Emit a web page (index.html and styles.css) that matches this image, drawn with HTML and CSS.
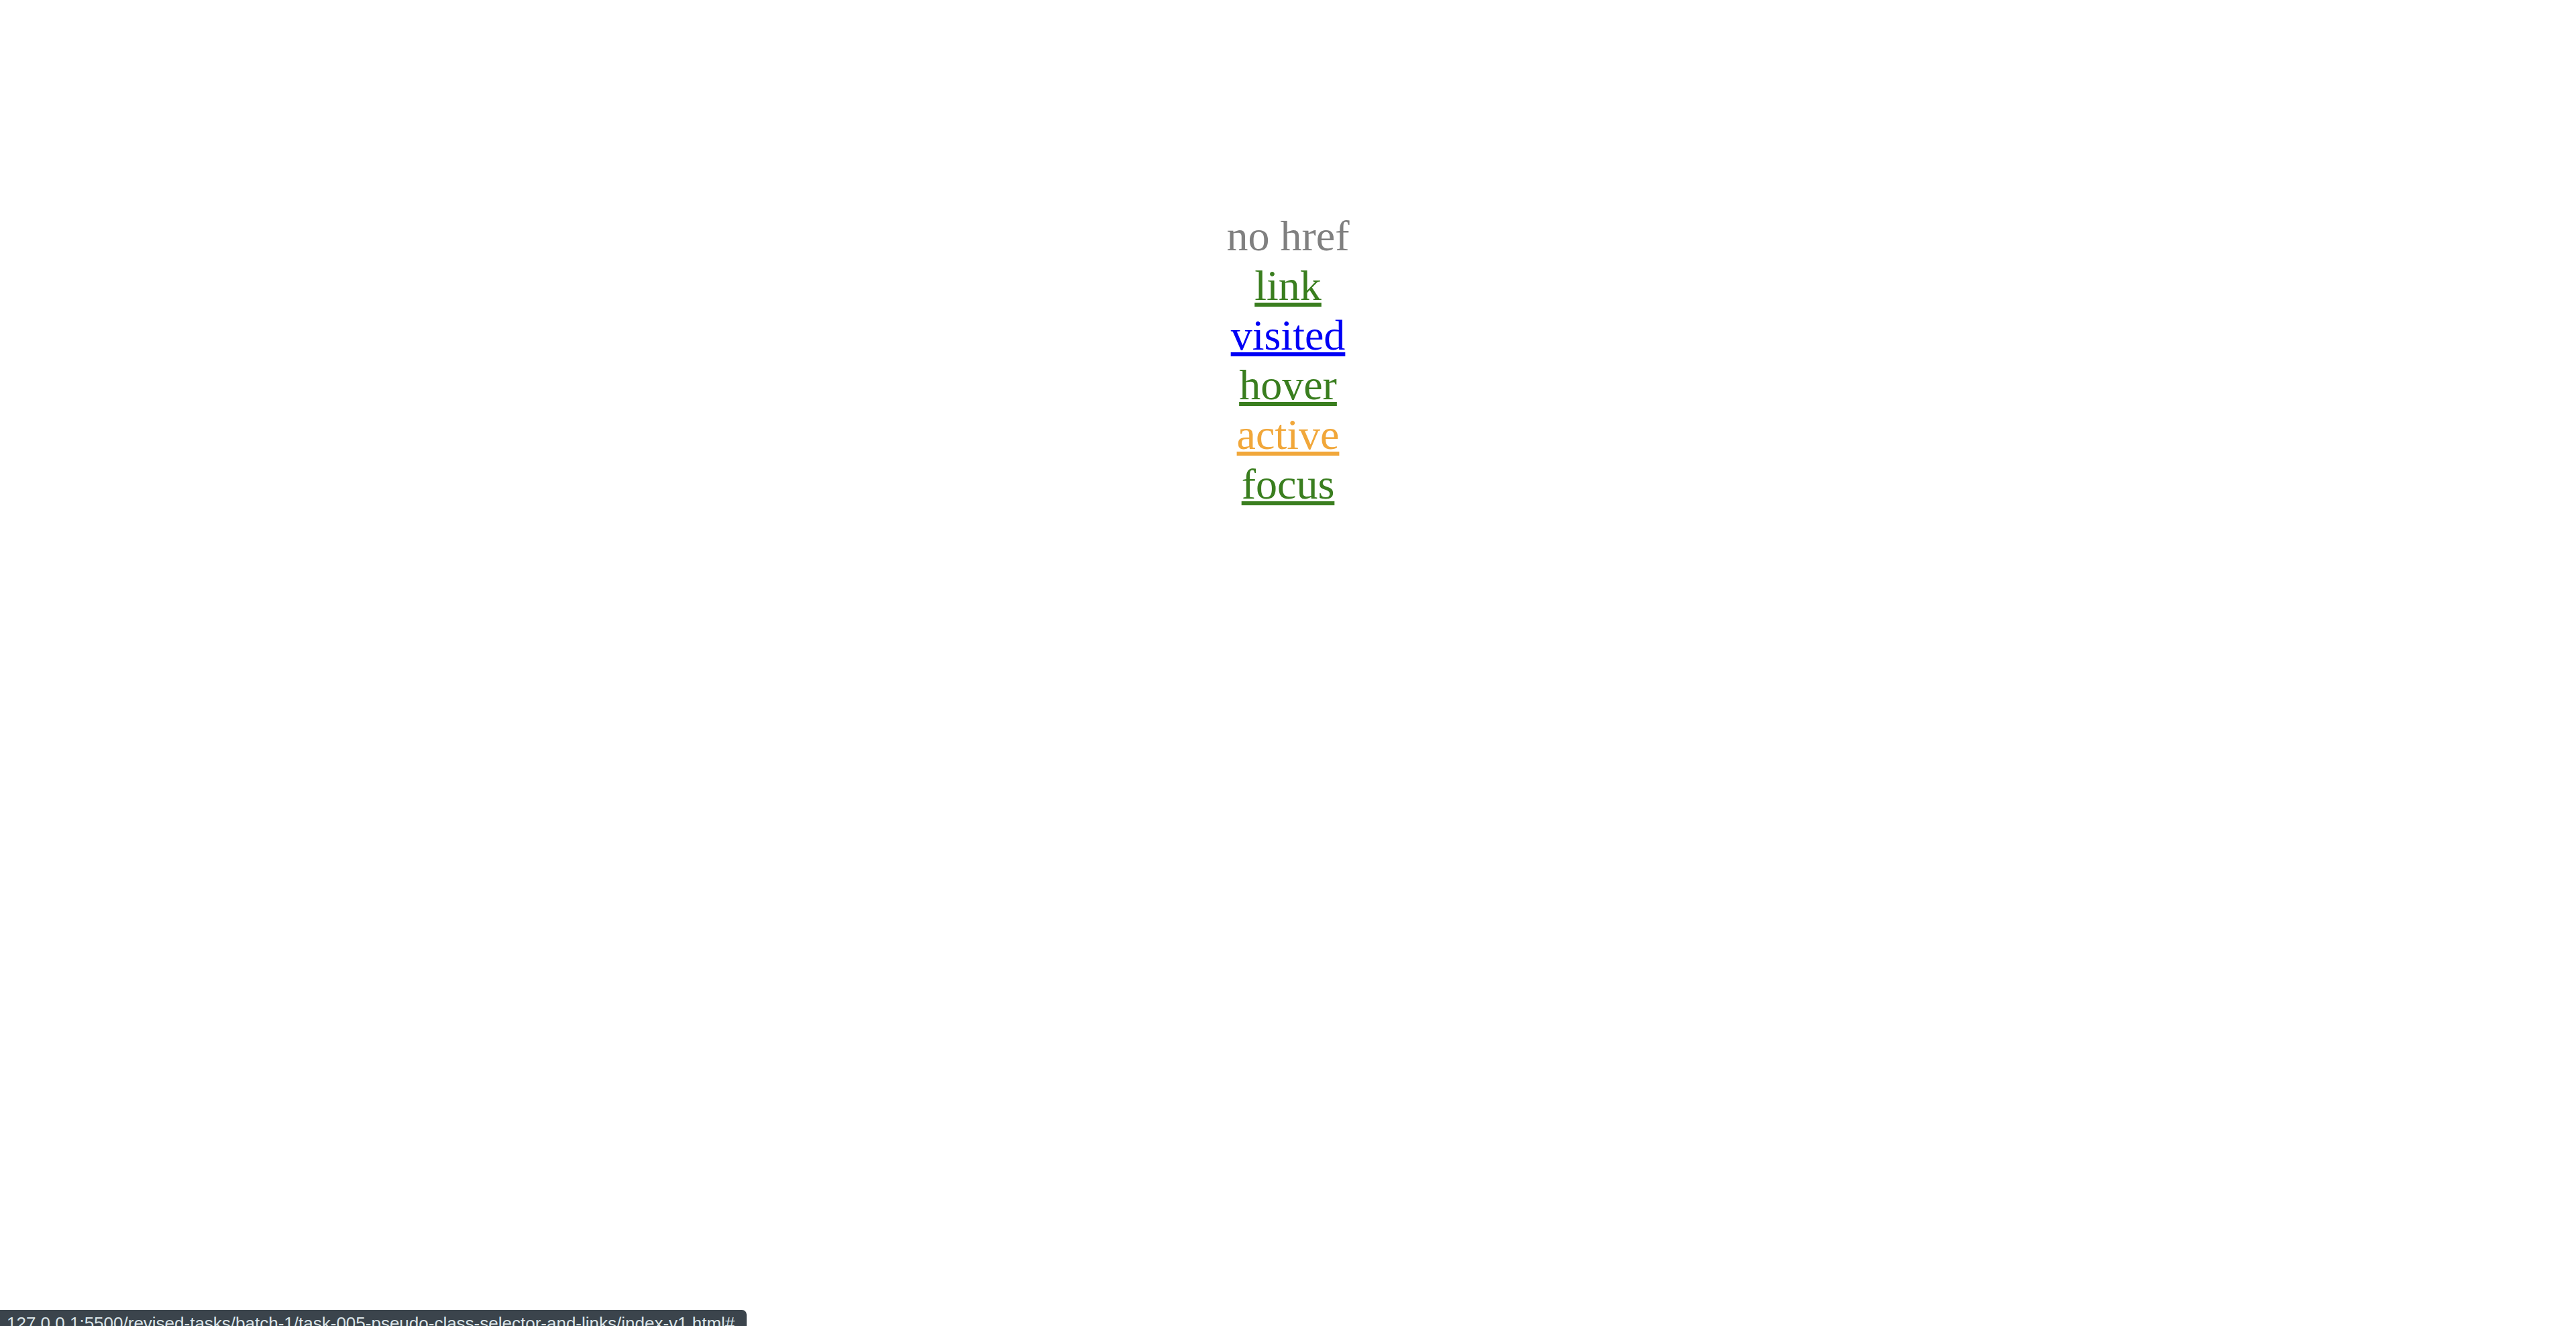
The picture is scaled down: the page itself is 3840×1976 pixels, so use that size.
FILE: index.html
```html
<!DOCTYPE html>
<html lang="en">
<head>
<meta charset="utf-8">
<title>Pseudo-class selectors and links</title>
<link rel="stylesheet" href="styles.css">
</head>
<body>
<main class="links">
  <a class="item nohref">no href</a>
  <a class="item link" href="#">link</a>
  <a class="item visited" href="#">visited</a>
  <a class="item hover" href="#">hover</a>
  <a class="item active" href="#">active</a>
  <a class="item focus" href="#">focus</a>
</main>
<div class="status">127.0.0.1:5500/revised-tasks/batch-1/task-005-pseudo-class-selector-and-links/index-v1.html#</div>
</body>
</html>
```
FILE: styles.css
```css
html, body {
  margin: 0;
  padding: 0;
  background: #ffffff;
}
body {
  font-family: "Liberation Serif", "Times New Roman", serif;
  font-size: 64px;
}
.links {
  display: flex;
  flex-direction: column;
  align-items: center;
  padding-top: 315px;
}
.item {
  line-height: normal;
  text-decoration: underline;
}
.nohref {
  color: #808080;
  text-decoration: none;
}
.link, .hover, .focus {
  color: #3a7e1f;
}
.visited {
  color: #0000f5;
}
.active {
  color: #f1a73a;
}
.status {
  position: fixed;
  left: 0;
  bottom: -17px;
  height: 41px;
  width: 1113px;
  box-sizing: border-box;
  background: #3b444c;
  border-top-right-radius: 7px;
  color: #dce6ea;
  font-family: "Liberation Sans", Arial, sans-serif;
  font-size: 26px;
  line-height: 41px;
  padding-left: 10px;
  white-space: nowrap;
  overflow: hidden;
}
```
